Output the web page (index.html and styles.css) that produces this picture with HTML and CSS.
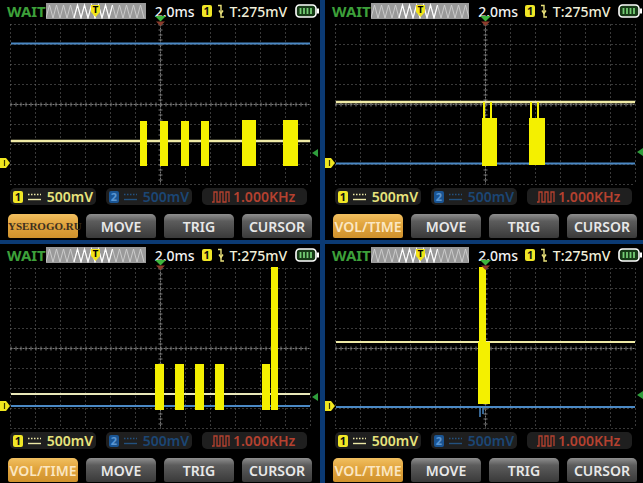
FILE: index.html
```html
<!DOCTYPE html>
<html lang="en">
<head>
  <meta charset="UTF-8" />
  <title>Scope captures</title>
  <link rel="stylesheet" href="styles.css">
</head>
<body>

  <!-- shared drawing parts -->
  <svg class="defs" width="0" height="0">
    <defs>
      <g id="graticule" fill="none">
        <path stroke="#737373" stroke-dasharray="1 3"
          d="M10.5 2.5V162.5M35.5 2.5V162.5M60.5 2.5V162.5M85.5 2.5V162.5M110.5 2.5V162.5M135.5 2.5V162.5M185.5 2.5V162.5M210.5 2.5V162.5M235.5 2.5V162.5M260.5 2.5V162.5M285.5 2.5V162.5M310.5 2.5V162.5"/>
        <path stroke="#737373" stroke-dasharray="1 3"
          d="M10.5 2.5H310.5M10.5 22.5H310.5M10.5 42.5H310.5M10.5 62.5H310.5M10.5 102.5H310.5M10.5 122.5H310.5M10.5 142.5H310.5M10.5 162.5H310.5"/>
        <path stroke="#7a7a7a" stroke-dasharray="2 1" d="M160.5 2.5V162.5M10.5 82.5H310.5"/>
        <path stroke="#7a7a7a" stroke-width="4" stroke-dasharray="1 4" d="M160.5 2.5V162.5M10.5 82.5H310.5"/>
      </g>
      <g id="trigpoint">
        <path d="M155 -6H166L160.5 -0.5Z" fill="#3db53d"/>
        <path d="M156 -0.5H165L160.5 4Z" fill="#8c3c2c"/>
      </g>
      <g id="ch1mark">
        <path d="M0 -5H6L10 0L6 5H0Z" fill="#f0e61e"/>
        <path d="M4.5 -3V3" stroke="#3a3600" stroke-width="1.2"/>
      </g>
      <path id="trigmark" d="M318 -4L312 0L318 4Z" fill="#2f9e3c"/>
      <g id="strip">
        <rect width="100" height="16" fill="#9a9a9a"/>
        <polyline fill="none" stroke="#cfcfcf" stroke-width="0.9"
          points="0,15 3.5,2 7,15 10.5,2 14,15 17.5,2 21,15 24.5,2 28,15 31.5,2 35,15 38.5,2 42,15 45.5,2 49,15 52.5,2 56,15 59.5,2 63,15 66.5,2 70,15 73.5,2 77,15 80.5,2 84,15 87.5,2 91,15 94.5,2 98,15"/>
        <polyline fill="none" stroke="#ffffff" stroke-width="1.1"
          points="28,15 31.5,2 35,15 38.5,2 42,15 45.5,2 49,15 52.5,2 56,15 59.5,2 63,15 66.5,2"/>
        <path d="M45 2H54V9L49.5 14L45 9Z" fill="#f2e41a"/>
        <text x="49.5" y="9.5" text-anchor="middle" class="strip-t">T</text>
      </g>
      <g id="edge" fill="none" stroke="#e8e07a" stroke-width="1.4">
        <path d="M1 1.5H4V13H7"/>
        <path d="M2 6.5L4 9.5L6 6.5"/>
      </g>
      <g id="battery">
        <rect x="1" y="1" width="20" height="12" rx="3.5" fill="#173a17" stroke="#fff" stroke-width="1.6"/>
        <rect x="22" y="4.5" width="2" height="5" fill="#fff"/>
        <path d="M5.5 4V10M9 4V10M12.5 4V10M16 4V10" stroke="#74cc74" stroke-width="1.8"/>
      </g>
      <g id="coupling" fill="none" stroke-width="1.4">
        <path d="M0 1.5H13" stroke-dasharray="1.5 1.5"/>
        <path d="M0 6.5H13"/>
      </g>
      <polyline id="square" fill="none" stroke="#b5412f" stroke-width="1.3"
        points="0,11 2,11 2,1 5,1 5,11 8,11 8,1 11,1 11,11 14,11 14,1 17,1 17,11"/>
    </defs>
  </svg>

  <div class="screens">

    <section class="scope">
      <div class="status">
        <span class="state">WAIT</span>
        <svg class="strip" width="100" height="16"><use href="#strip"/></svg>
        <span class="timebase">2.0ms</span>
        <span class="badge ch1">1</span>
        <svg class="edge" width="8" height="14"><use href="#edge"/></svg>
        <span class="trig">T:275mV</span>
        <svg class="battery" width="25" height="14"><use href="#battery"/></svg>
      </div>
      <svg class="plot" width="320" height="164">
        <use href="#graticule"/>
        <path d="M11 21.5H310" stroke="#4a88c4" stroke-width="2"/>
        <path d="M11 119H310" stroke="#efeaa6" stroke-width="2.5"/>
        <g fill="#f4f000">
          <rect x="140" y="99" width="7" height="45"/>
          <rect x="160" y="99" width="8" height="45"/>
          <rect x="181" y="99" width="8" height="45"/>
          <rect x="201" y="99" width="8" height="45"/>
          <rect x="242" y="98" width="14" height="46"/>
          <rect x="283" y="98" width="15" height="46"/>
        </g>
        <use href="#trigpoint"/>
        <use href="#ch1mark" y="141"/>
        <use href="#trigmark" y="131"/>
      </svg>
      <div class="channels">
        <div class="chip ch1"><span class="badge">1</span><svg class="coupling" width="13" height="8"><use href="#coupling"/></svg><span>500mV</span></div>
        <div class="chip ch2"><span class="badge">2</span><svg class="coupling" width="13" height="8"><use href="#coupling"/></svg><span>500mV</span></div>
        <div class="chip gen"><svg class="wave" width="18" height="12"><use href="#square"/></svg><span>1.000KHz</span></div>
      </div>
      <div class="menu">
        <button class="btn active mark">YSEROGO.RU</button>
        <button class="btn">MOVE</button>
        <button class="btn">TRIG</button>
        <button class="btn">CURSOR</button>
      </div>
    </section>

    <section class="scope">
      <div class="status">
        <span class="state">WAIT</span>
        <svg class="strip" width="100" height="16"><use href="#strip"/></svg>
        <span class="timebase">2.0ms</span>
        <span class="badge ch1">1</span>
        <svg class="edge" width="8" height="14"><use href="#edge"/></svg>
        <span class="trig">T:275mV</span>
        <svg class="battery" width="25" height="14"><use href="#battery"/></svg>
      </div>
      <svg class="plot" width="320" height="164">
        <use href="#graticule"/>
        <path d="M11 141.5H310" stroke="#4a88c4" stroke-width="2"/>
        <path d="M11 80H310" stroke="#efeaa6" stroke-width="2.5"/>
        <g fill="#f4f000">
          <rect x="158" y="80" width="2" height="18"/>
          <rect x="165" y="80" width="2" height="18"/>
          <rect x="157" y="96" width="15" height="48"/>
          <rect x="205" y="80" width="2" height="18"/>
          <rect x="212" y="80" width="2" height="18"/>
          <rect x="204" y="96" width="16" height="47"/>
        </g>
        <use href="#trigpoint"/>
        <use href="#ch1mark" y="141"/>
        <use href="#trigmark" y="130"/>
      </svg>
      <div class="channels">
        <div class="chip ch1"><span class="badge">1</span><svg class="coupling" width="13" height="8"><use href="#coupling"/></svg><span>500mV</span></div>
        <div class="chip ch2"><span class="badge">2</span><svg class="coupling" width="13" height="8"><use href="#coupling"/></svg><span>500mV</span></div>
        <div class="chip gen"><svg class="wave" width="18" height="12"><use href="#square"/></svg><span>1.000KHz</span></div>
      </div>
      <div class="menu">
        <button class="btn active">VOL/TIME</button>
        <button class="btn">MOVE</button>
        <button class="btn">TRIG</button>
        <button class="btn">CURSOR</button>
      </div>
    </section>

    <section class="scope">
      <div class="status">
        <span class="state">WAIT</span>
        <svg class="strip" width="100" height="16"><use href="#strip"/></svg>
        <span class="timebase">2.0ms</span>
        <span class="badge ch1">1</span>
        <svg class="edge" width="8" height="14"><use href="#edge"/></svg>
        <span class="trig">T:275mV</span>
        <svg class="battery" width="25" height="14"><use href="#battery"/></svg>
      </div>
      <svg class="plot" width="320" height="164">
        <use href="#graticule"/>
        <path d="M11 140H310" stroke="#4a88c4" stroke-width="2"/>
        <path d="M11 128H310" stroke="#e9e7b8" stroke-width="1.8"/>
        <g fill="#f4f000">
          <rect x="155" y="98" width="9" height="46"/>
          <rect x="175" y="98" width="9" height="46"/>
          <rect x="195" y="98" width="9" height="46"/>
          <rect x="215" y="98" width="9" height="46"/>
          <rect x="262" y="98" width="8" height="46"/>
          <rect x="271" y="1" width="7" height="143"/>
        </g>
        <use href="#trigpoint"/>
        <use href="#ch1mark" y="140"/>
        <use href="#trigmark" y="131"/>
      </svg>
      <div class="channels">
        <div class="chip ch1"><span class="badge">1</span><svg class="coupling" width="13" height="8"><use href="#coupling"/></svg><span>500mV</span></div>
        <div class="chip ch2"><span class="badge">2</span><svg class="coupling" width="13" height="8"><use href="#coupling"/></svg><span>500mV</span></div>
        <div class="chip gen"><svg class="wave" width="18" height="12"><use href="#square"/></svg><span>1.000KHz</span></div>
      </div>
      <div class="menu">
        <button class="btn active">VOL/TIME</button>
        <button class="btn">MOVE</button>
        <button class="btn">TRIG</button>
        <button class="btn">CURSOR</button>
      </div>
    </section>

    <section class="scope">
      <div class="status">
        <span class="state">WAIT</span>
        <svg class="strip" width="100" height="16"><use href="#strip"/></svg>
        <span class="timebase">2.0ms</span>
        <span class="badge ch1">1</span>
        <svg class="edge" width="8" height="14"><use href="#edge"/></svg>
        <span class="trig">T:275mV</span>
        <svg class="battery" width="25" height="14"><use href="#battery"/></svg>
      </div>
      <svg class="plot" width="320" height="164">
        <use href="#graticule"/>
        <path d="M11 141H310" stroke="#4a88c4" stroke-width="2"/>
        <path d="M155 141V151M158 141V148" stroke="#4a88c4" stroke-width="1.5"/>
        <path d="M11 76H310" stroke="#efeaa6" stroke-width="2"/>
        <g fill="#f4f000">
          <rect x="154" y="1" width="7" height="79"/>
          <rect x="153" y="76" width="12" height="62"/>
        </g>
        <use href="#trigpoint"/>
        <use href="#ch1mark" y="140"/>
        <use href="#trigmark" y="129"/>
      </svg>
      <div class="channels">
        <div class="chip ch1"><span class="badge">1</span><svg class="coupling" width="13" height="8"><use href="#coupling"/></svg><span>500mV</span></div>
        <div class="chip ch2"><span class="badge">2</span><svg class="coupling" width="13" height="8"><use href="#coupling"/></svg><span>500mV</span></div>
        <div class="chip gen"><svg class="wave" width="18" height="12"><use href="#square"/></svg><span>1.000KHz</span></div>
      </div>
      <div class="menu">
        <button class="btn active">VOL/TIME</button>
        <button class="btn">MOVE</button>
        <button class="btn">TRIG</button>
        <button class="btn">CURSOR</button>
      </div>
    </section>

  </div>

</body>
</html>
```

FILE: styles.css
```css
body {
  margin: 0;
  background-color: #0b3a74;
  font-family: "Noto Sans", "Open Sans", sans-serif;
  overflow: hidden;
}

.defs {
  display: block;
}

.screens {
  display: grid;
  grid-template-columns: 320px 318px;
  grid-template-rows: 240px 239px;
  gap: 4px 5px;
}

.scope {
  background-color: #000;
  overflow: hidden;
}

/* top status line */
.status {
  display: flex;
  align-items: center;
  height: 22px;
  padding-left: 7px;
}

.state {
  color: #3da03a;
  font-size: 15px;
  font-weight: 700;
  width: 37px;
}

.strip {
  margin-left: 2px;
}

.strip-t {
  font-size: 8px;
  font-weight: 700;
  font-family: "DejaVu Sans", sans-serif;
  fill: #000;
}

.timebase {
  margin-left: 9px;
  color: #f2f2f2;
  font-size: 14px;
  font-weight: 500;
}

.badge {
  display: inline-flex;
  justify-content: center;
  align-items: center;
  width: 10px;
  height: 12px;
  border-radius: 2px;
  font-size: 11px;
  font-weight: 700;
  line-height: 12px;
}

.badge.ch1,
.ch1 .badge {
  background-color: #f0e626;
  color: #111;
}

.status .badge {
  margin-left: 7px;
}

.edge {
  margin-left: 5px;
}

.trig {
  margin-left: 5px;
  color: #f1efd9;
  font-size: 14px;
  font-weight: 500;
}

.battery {
  margin-left: 8px;
}

.plot {
  display: block;
  overflow: visible;
}

/* channel readouts */
.channels {
  display: flex;
  gap: 10px;
  margin: 2px 0 0 10px;
}

.chip {
  display: flex;
  align-items: center;
  height: 17px;
  padding: 0 3px;
  border-radius: 5px;
  background-color: #1f1f1f;
  font-size: 14px;
  font-weight: 600;
  box-sizing: border-box;
}

.chip.ch1,
.chip.ch2 {
  width: 86px;
}

.chip.gen {
  width: 105px;
  padding-left: 10px;
}

.coupling {
  margin-left: 5px;
}

.chip span:last-child {
  margin-left: 6px;
}

.ch1 {
  color: #e8e47c;
}

.ch1 .coupling {
  stroke: #ece8a6;
}

.ch2 {
  color: #1b4674;
}

.ch2 .badge {
  background-color: #1a5594;
  color: #5a96d2;
}

.ch2 .coupling {
  stroke: #23517f;
}

.gen {
  color: #b5412f;
}

.gen span:last-child {
  margin-left: 3px;
}

/* soft keys */
.menu {
  display: flex;
  gap: 8px;
  margin: 9px 0 0 8px;
}

.btn {
  width: 70px;
  height: 24px;
  padding: 0;
  border: none;
  border-radius: 5px 5px 2px 2px;
  background: linear-gradient(#8f8f8f, #5c5c5c 30%, #3a3a3a);
  color: #e8e8e8;
  font-family: "Noto Sans", sans-serif;
  font-size: 14px;
  font-weight: 600;
}

.btn.active {
  background: linear-gradient(#f2c060, #e2a640 40%, #cf912c);
  color: #fbe7c2;
}

.btn.mark {
  color: #3d3020;
  font-family: "Liberation Serif", serif;
  font-size: 11px;
  font-weight: 700;
}
```
